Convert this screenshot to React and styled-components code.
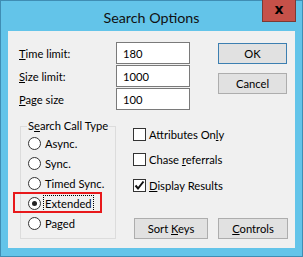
import styled, { createGlobalStyle } from "styled-components";

const GlobalStyle = createGlobalStyle`
  html, body {
    margin: 0;
    padding: 0;
    background: #ffffff;
  }
  * {
    box-sizing: border-box;
  }
`;

const fields = [
  { key: "T", rest: "ime limit:", value: "180" },
  { key: "S", rest: "ize limit:", value: "1000" },
  { key: "P", rest: "age size", value: "100" },
];

const callTypes = ["Async.", "Sync.", "Timed Sync.", "Extended", "Paged"];

const options = [
  { pre: "Attributes On", key: "l", post: "y", checked: false },
  { pre: "Chase ", key: "r", post: "eferrals", checked: false },
  { pre: "", key: "D", post: "isplay Results", checked: true },
];

function App() {
  return (
    <>
      <GlobalStyle />
      <StWindow>
        <StTitleBar>
          <StTitle>Search Options</StTitle>
          <StClose>x</StClose>
        </StTitleBar>
        <StClient>
          <StTopRow>
            <StFields>
              {fields.map((f) => (
                <StFieldRow key={f.key}>
                  <StLabel>
                    <span>
                      <u>{f.key}</u>
                      {f.rest}
                    </span>
                  </StLabel>
                  <StInput>{f.value}</StInput>
                </StFieldRow>
              ))}
            </StFields>
            <StButtonColumn>
              <StButton $default>OK</StButton>
              <StButton>Cancel</StButton>
            </StButtonColumn>
          </StTopRow>

          <StBottomRow>
            <StGroup>
              <StLegend>
                S<u>e</u>arch Call Type
              </StLegend>
              {callTypes.map((name) => {
                const selected = name === "Extended";
                return (
                  <StRadioRow key={name}>
                    {selected && <StHighlight />}
                    <StRadio $checked={selected} />
                    <StRadioText $focused={selected}>{name}</StRadioText>
                  </StRadioRow>
                );
              })}
            </StGroup>

            <StOptions>
              <StChecks>
                {options.map((o) => (
                  <StCheckRow key={o.post}>
                    <StCheckBox>
                      {o.checked && (
                        <svg width="11" height="11" viewBox="0 0 11 11">
                          <path
                            d="M1.5 5.5 L4 8.5 L9.5 1.5"
                            fill="none"
                            stroke="#111"
                            strokeWidth="2"
                          />
                        </svg>
                      )}
                    </StCheckBox>
                    <span>
                      {o.pre}
                      <u>{o.key}</u>
                      {o.post}
                    </span>
                  </StCheckRow>
                ))}
              </StChecks>
              <StBottomButtons>
                <StButton $width={74}>
                  <span>
                    Sort <u>K</u>eys
                  </span>
                </StButton>
                <StButton $width={70}>
                  <span>
                    <u>C</u>ontrols
                  </span>
                </StButton>
              </StBottomButtons>
            </StOptions>
          </StBottomRow>
        </StClient>
      </StWindow>
    </>
  );
}

const StWindow = styled.div`
  display: flex;
  flex-direction: column;
  width: 303px;
  height: 257px;
  border: 1px solid #3f8db3;
  background-color: #63c4e9;
  font-family: Lato, "Noto Sans", sans-serif;
  font-size: 11.2px;
  color: #000;
`;

const StTitleBar = styled.div`
  position: relative;
  height: 30px;
  display: flex;
  align-items: center;
  justify-content: center;
`;

const StTitle = styled.span`
  font-size: 14.3px;
  color: #111;
  padding-top: 2px;
`;

const StClose = styled.div`
  position: absolute;
  top: -1px;
  right: 6px;
  width: 34px;
  height: 22px;
  display: flex;
  align-items: center;
  justify-content: center;
  background-color: #c65149;
  border: 1px solid #7b3a34;
  border-top: none;
  font-family: "DejaVu Sans", sans-serif;
  font-weight: bold;
  font-size: 14px;
  line-height: 1;
  padding-bottom: 3px;
`;

const StClient = styled.div`
  flex: 1;
  margin: 0 7px 8px 7px;
  padding: 11px 8px 0 11px;
  background-color: #f0f0f0;
  display: flex;
  flex-direction: column;
`;

const StTopRow = styled.div`
  display: flex;
  gap: 28px;
`;

const StFields = styled.div`
  display: grid;
  grid-template-columns: 97px 74px;
  grid-auto-rows: 22px;
  row-gap: 1px;
`;

const StFieldRow = styled.div`
  display: contents;
`;

const StLabel = styled.span`
  display: flex;
  align-items: center;
`;

const StInput = styled.div`
  display: flex;
  align-items: center;
  padding-left: 6px;
  background: #fff;
  border: 1px solid #7a7a7a;
`;

const StButtonColumn = styled.div`
  display: flex;
  flex-direction: column;
  gap: 9px;
  padding-top: 1px;
`;

const StButton = styled.div`
  width: ${({ $width }) => $width || 69}px;
  height: 21px;
  display: flex;
  align-items: center;
  justify-content: center;
  background-color: #e1e1e1;
  border: 1px solid ${({ $default }) => ($default ? "#3c7fb1" : "#adadad")};
  white-space: nowrap;
`;

const StBottomRow = styled.div`
  display: flex;
  margin-top: 8px;
  height: 122px;
`;

const StGroup = styled.fieldset`
  margin: 0 0 0 1px;
  width: 96px;
  min-width: 96px;
  height: 121px;
  padding: 0 0 0 6px;
  border: 1px solid #dcdcdc;
  display: flex;
  flex-direction: column;
`;

const StLegend = styled.legend`
  padding: 0 1px;
  line-height: 16px;
  margin-bottom: -1px;
  white-space: nowrap;
`;

const StRadioRow = styled.div`
  position: relative;
  height: 20px;
  display: flex;
  align-items: center;
  gap: 3px;
  padding-left: 1px;
`;

const StHighlight = styled.div`
  position: absolute;
  left: -14px;
  top: -1px;
  width: 89px;
  height: 21px;
  border: 2px solid #e8191b;
`;

const StRadio = styled.span`
  width: 13px;
  height: 13px;
  border-radius: 50%;
  border: 1px solid #333;
  background: #fff;
  display: flex;
  align-items: center;
  justify-content: center;

  &::after {
    content: "";
    width: 5px;
    height: 5px;
    border-radius: 50%;
    background: ${({ $checked }) => ($checked ? "#222" : "transparent")};
  }
`;

const StRadioText = styled.span`
  padding: 0 1px;
  outline: ${({ $focused }) => ($focused ? "1px dotted #000" : "none")};
  line-height: 15px;
  white-space: nowrap;
`;

const StOptions = styled.div`
  display: flex;
  flex-direction: column;
  margin-left: 17px;
  flex: 1;
`;

const StChecks = styled.div`
  display: flex;
  flex-direction: column;
  gap: 9.5px;
  padding-top: 8px;
`;

const StCheckRow = styled.div`
  height: 16px;
  display: flex;
  align-items: center;
  gap: 3px;
  white-space: nowrap;
`;

const StCheckBox = styled.span`
  width: 13px;
  height: 13px;
  border: 1px solid #333;
  background: #fff;
  display: flex;
  align-items: center;
  justify-content: center;
`;

const StBottomButtons = styled.div`
  display: flex;
  gap: 10px;
  margin-top: auto;
  padding-left: 1px;
  padding-bottom: 1px;
`;

export default App;
